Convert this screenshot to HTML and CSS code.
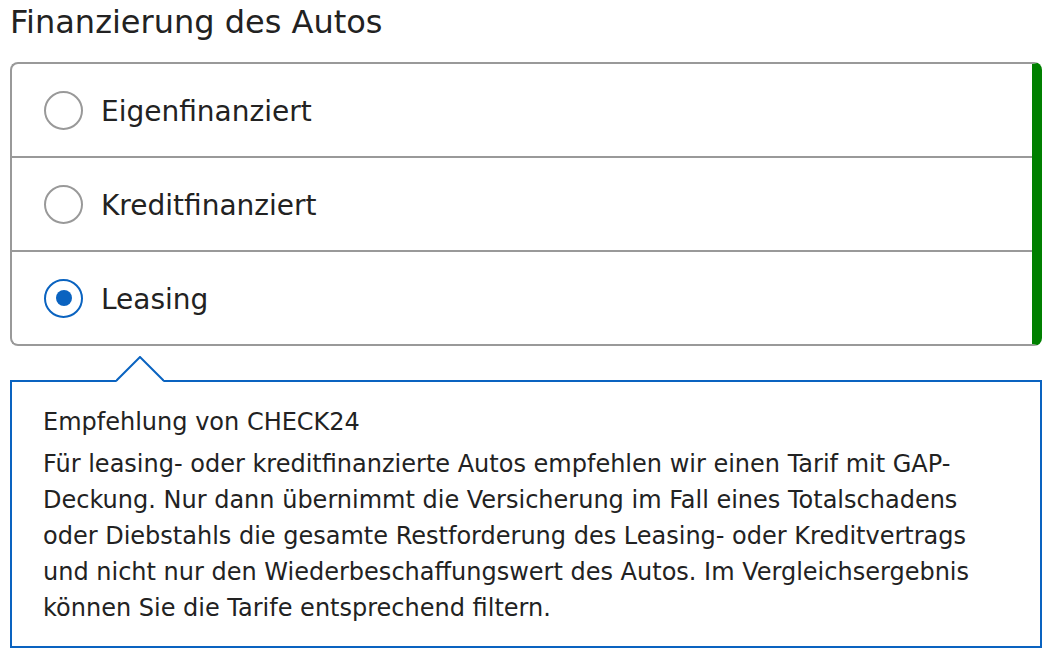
FILE: index.html
```html
<!DOCTYPE html>
<html lang="de">
<head>
<meta charset="utf-8">
<title>Finanzierung des Autos</title>
<link rel="stylesheet" href="styles.css">
</head>
<body>
<div class="page">
  <h1 class="title">Finanzierung des Autos</h1>
  <div class="options">
    <label class="option">
      <span class="radio"></span>
      <span class="label">Eigenfinanziert</span>
    </label>
    <label class="option">
      <span class="radio"></span>
      <span class="label">Kreditfinanziert</span>
    </label>
    <label class="option">
      <span class="radio radio-checked"><span class="dot"></span></span>
      <span class="label">Leasing</span>
    </label>
  </div>
  <div class="hint">
    <svg class="hint-arrow" width="48" height="26" viewBox="0 0 48 26">
      <polygon points="0,26 24,1.5 48,26" fill="#fff"/>
      <polyline points="0,25 24,1 48,25" fill="none" stroke="#0a63c0" stroke-width="2"/>
    </svg>
    <div class="hint-title">Empfehlung von CHECK24</div>
    <p class="hint-text">Für leasing- oder kreditfinanzierte Autos empfehlen wir einen Tarif mit GAP-Deckung. Nur dann übernimmt die Versicherung im Fall eines Totalschadens oder Diebstahls die gesamte Restforderung des Leasing- oder Kreditvertrags und nicht nur den Wiederbeschaffungswert des Autos. Im Vergleichsergebnis können Sie die Tarife entsprechend filtern.</p>
  </div>
</div>
</body>
</html>
```

FILE: styles.css
```css
* {
  box-sizing: border-box;
}

html, body {
  margin: 0;
  padding: 0;
  background: #fff;
}

body {
  font-family: "DejaVu Sans", Verdana, sans-serif;
  color: #222;
}

.page {
  padding: 4px 12px 0 10px;
}

.title {
  margin: 0 0 21px;
  font-size: 32px;
  font-weight: normal;
  line-height: 37px;
  color: #222;
}

.options {
  display: flex;
  flex-direction: column;
  border: 2px solid #999;
  border-right: 10px solid #008000;
  border-radius: 8px;
  overflow: hidden;
}

.option {
  display: flex;
  align-items: center;
  gap: 18px;
  height: 92px;
  padding-left: 32px;
  cursor: pointer;
}

.option + .option {
  height: 94px;
  border-top: 2px solid #999;
}

.radio {
  width: 39px;
  height: 39px;
  flex: none;
  border: 2px solid #999;
  border-radius: 50%;
  display: flex;
  align-items: center;
  justify-content: center;
  background: #fff;
}

.radio-checked {
  border-color: #0a63c0;
}

.dot {
  width: 16px;
  height: 16px;
  border-radius: 50%;
  background: #0a63c0;
}

.label {
  font-size: 28px;
  line-height: 34px;
  padding-top: 3px;
  color: #222;
}

.hint {
  position: relative;
  margin-top: 34px;
  border: 2px solid #0a63c0;
  padding: 22px 31px 20px;
}

.hint-arrow {
  position: absolute;
  top: -26px;
  left: 104px;
  display: block;
}

.hint-title {
  font-size: 24px;
  line-height: 36px;
  margin-bottom: 6px;
}

.hint-text {
  margin: 0;
  font-size: 24px;
  line-height: 36px;
}
```
